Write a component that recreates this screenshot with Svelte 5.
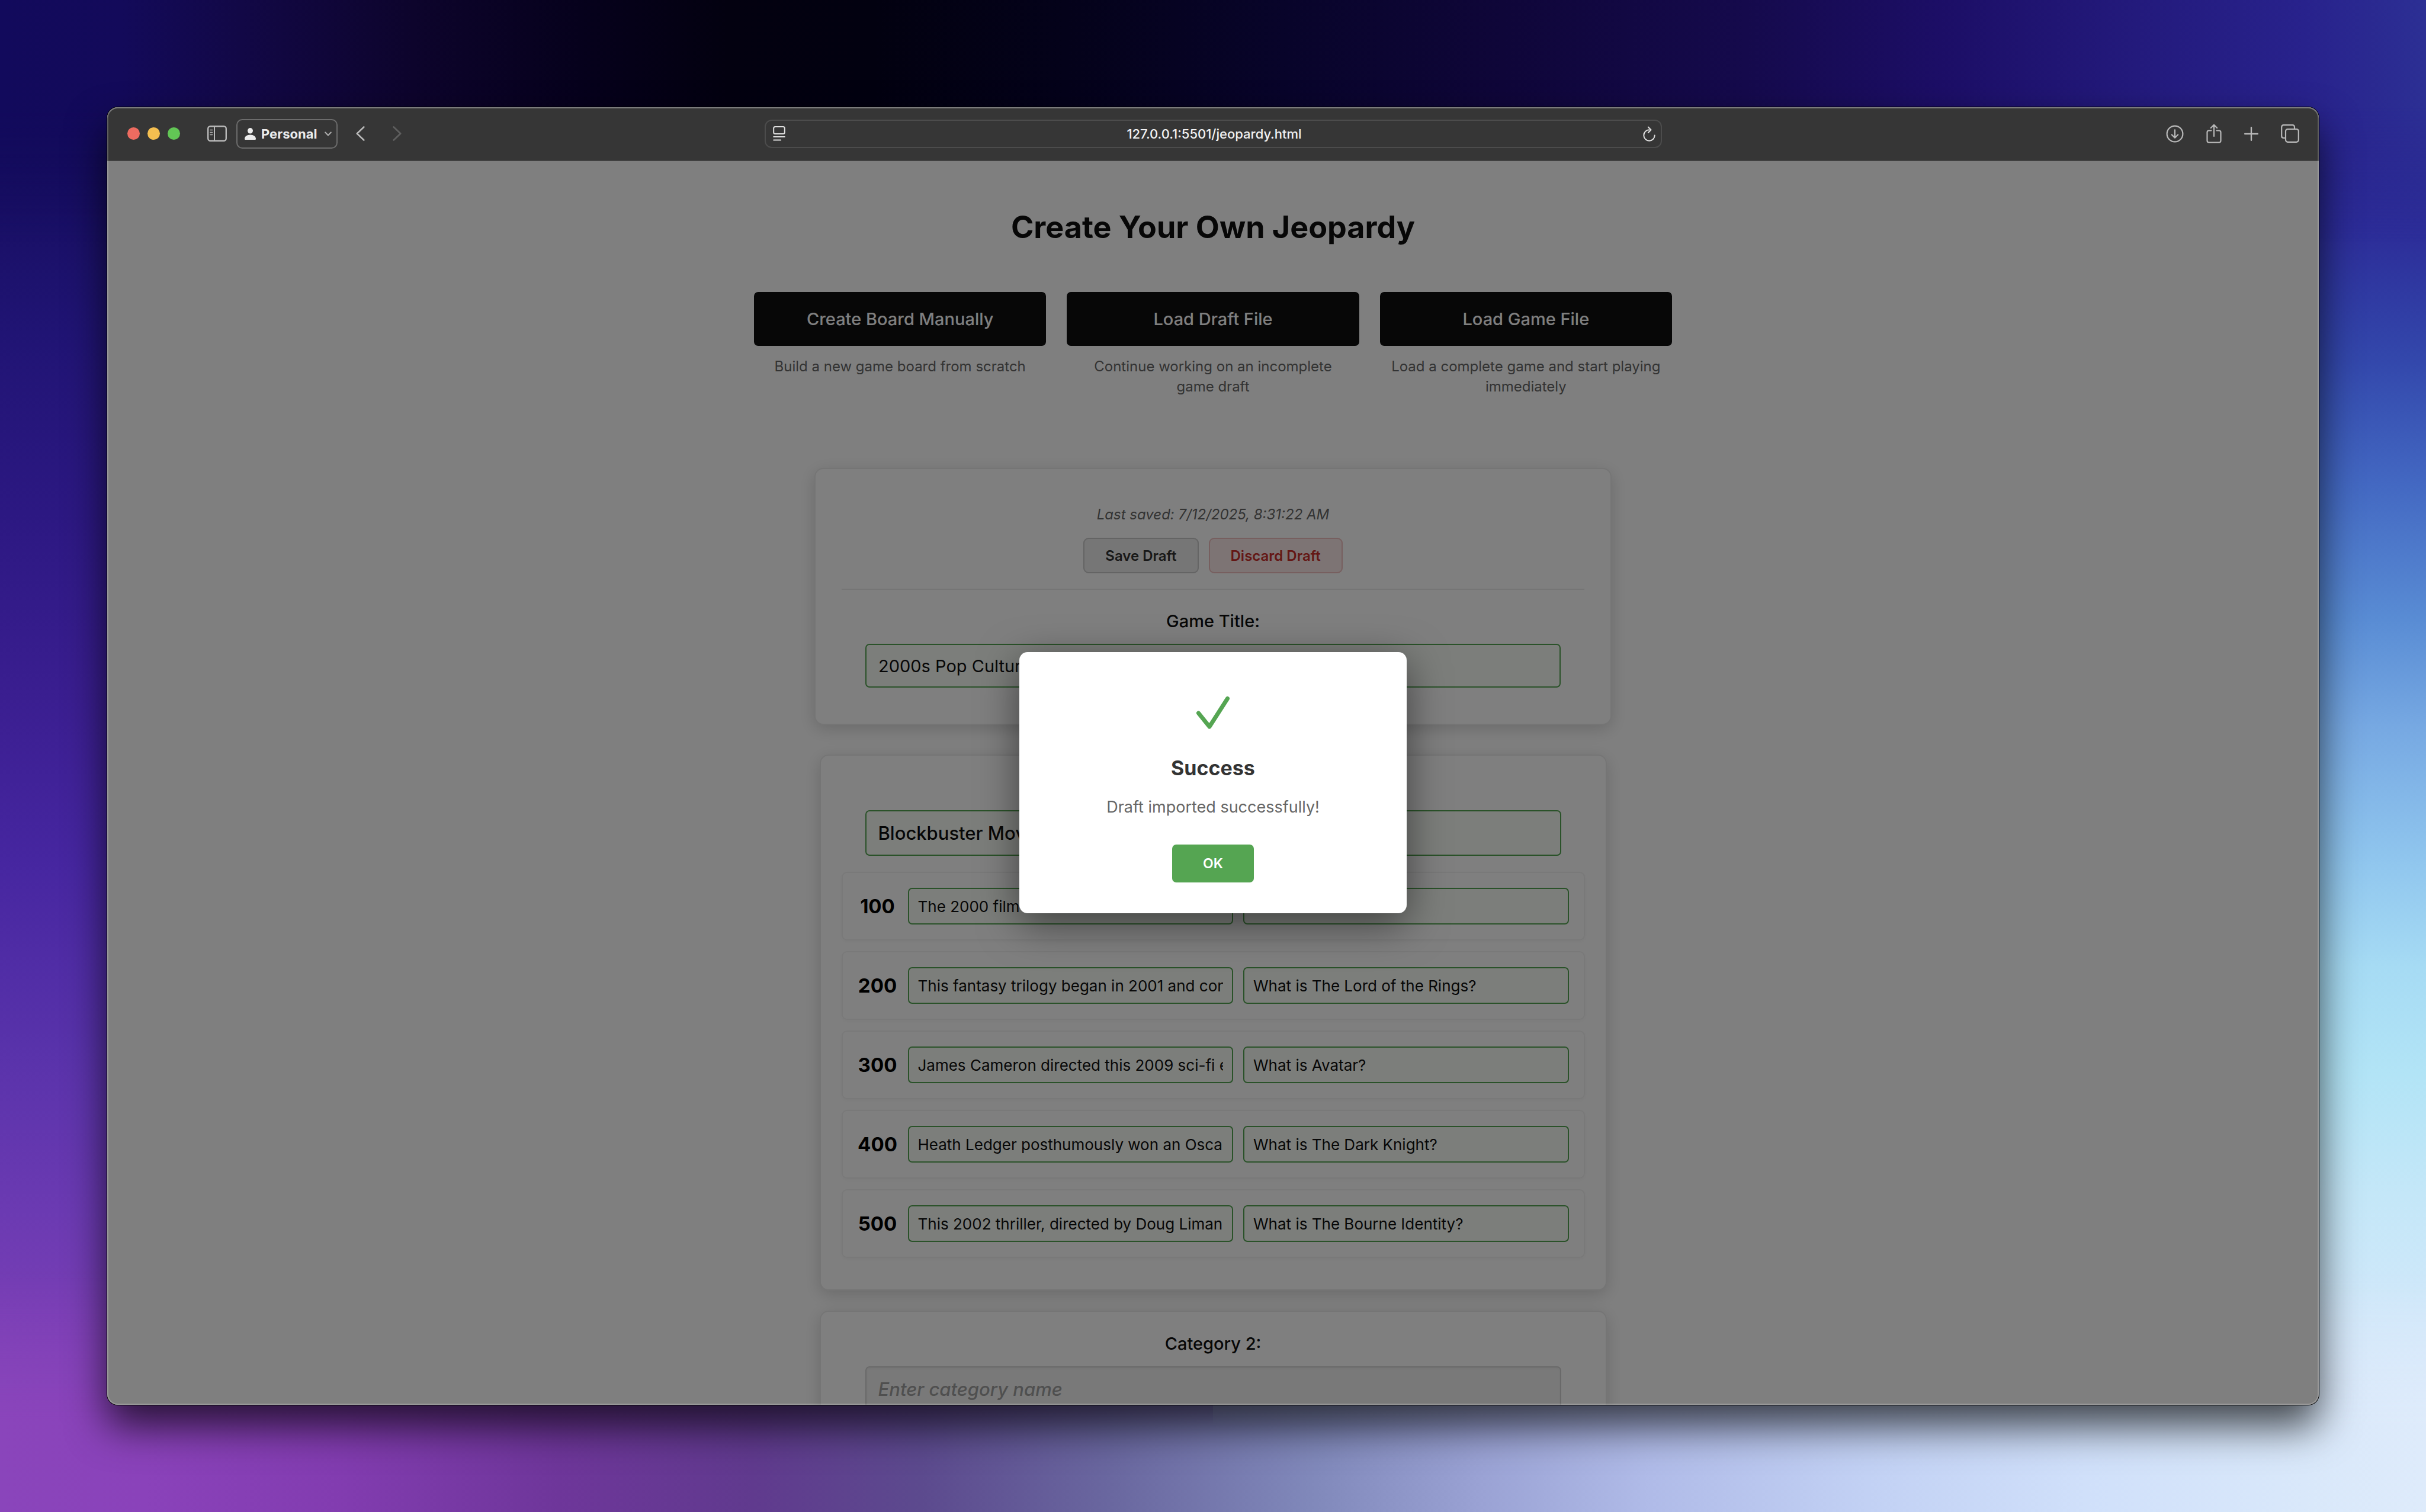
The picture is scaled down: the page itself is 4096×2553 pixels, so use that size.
<script>
  const actions = [
    { label: 'Create Board Manually', hint: 'Build a new game board from scratch' },
    { label: 'Load Draft File', hint: 'Continue working on an incomplete game draft' },
    { label: 'Load Game File', hint: 'Load a complete game and start playing immediately' },
  ];

  let gameTitle = $state('2000s Pop Culture');
  let categories = $state([
    {
      id: 1,
      name: 'Blockbuster Movies',
      questions: [
        { value: 100, clue: 'The 2000 film that won Best Picture', answer: 'What is Gladiator?' },
        { value: 200, clue: 'This fantasy trilogy began in 2001 and concluded in 2003', answer: 'What is The Lord of the Rings?' },
        { value: 300, clue: 'James Cameron directed this 2009 sci-fi epic', answer: 'What is Avatar?' },
        { value: 400, clue: 'Heath Ledger posthumously won an Oscar for this film', answer: 'What is The Dark Knight?' },
        { value: 500, clue: 'This 2002 thriller, directed by Doug Liman', answer: 'What is The Bourne Identity?' },
      ],
    },
    { id: 2, name: '', questions: [] },
  ]);
</script>

<div class="desktop">
  <div class="window">
    <header class="toolbar">
      <div class="group">
        <div class="lights">
          <button class="light red" aria-label="Close window"></button>
          <button class="light yellow" aria-label="Minimize window"></button>
          <button class="light green" aria-label="Zoom window"></button>
        </div>
        <button class="icon" aria-label="Show sidebar">
          <svg width="33" height="27" viewBox="0 0 33 27" fill="none" stroke="#b9b9b9" stroke-width="2.4" stroke-linecap="round">
            <rect x="1.2" y="1.2" width="30.6" height="24.6" rx="4" />
            <path d="M12 1.5v24" stroke-width="2" />
            <path d="M5 7.5h3.6M5 11.5h3.6M5 15.5h3.6" stroke-width="1.6" />
          </svg>
        </button>
        <button class="profile">
          <svg width="19" height="20" viewBox="0 0 19 20" fill="#ececec">
            <ellipse cx="9.5" cy="4.8" rx="4.5" ry="4.8" />
            <path d="M0 18.5C0 14.4 4 11.4 9.5 11.4S19 14.4 19 18.5Q19 20 17.5 20H1.5Q0 20 0 18.5Z" />
          </svg>
          <span>Personal</span>
          <svg width="12" height="8" viewBox="0 0 12 8" fill="none" stroke="#b0b0b0" stroke-width="2" stroke-linecap="round" stroke-linejoin="round"><path d="M1.2 1.5 6 6.5l4.8-5" /></svg>
        </button>
        <div class="history">
          <button class="icon" aria-label="Back">
            <svg width="15" height="25" viewBox="0 0 15 25" fill="none" stroke="#b9b9b9" stroke-width="2.6" stroke-linecap="round" stroke-linejoin="round"><path d="M13.3 1.5 1.8 12.5l11.5 11" /></svg>
          </button>
          <button class="icon" aria-label="Forward">
            <svg width="15" height="25" viewBox="0 0 15 25" fill="none" stroke="#5f5f5f" stroke-width="2.6" stroke-linecap="round" stroke-linejoin="round"><path d="m1.7 1.5 11.5 11-11.5 11" /></svg>
          </button>
        </div>
      </div>

      <div class="address">
        <button class="icon" aria-label="Page menu">
          <svg width="21" height="25" viewBox="0 0 21 25" fill="none" stroke="#dedede" stroke-width="2" stroke-linecap="round">
            <rect x="1.2" y="1" width="18.6" height="12" rx="2.5" />
            <path d="M1.2 18h18.6M1.2 23.5h12" />
          </svg>
        </button>
        <input aria-label="Address" value="127.0.0.1:5501/jeopardy.html" />
        <button class="icon" aria-label="Reload">
          <svg width="21" height="26" viewBox="0 0 21 26" fill="none" stroke="#dedede" stroke-width="2" stroke-linecap="round" stroke-linejoin="round">
            <path d="M10.5 6.3A9.2 9.2 0 1 0 19.7 15.5" />
            <path d="m8.8 1.5 4.7 4.8-4.7 4.7" />
          </svg>
        </button>
      </div>

      <div class="group tools">
        <button class="icon" aria-label="Downloads">
          <svg width="30" height="30" viewBox="0 0 30 30" fill="none" stroke="#b9b9b9" stroke-width="2.2" stroke-linecap="round" stroke-linejoin="round">
            <circle cx="15" cy="15" r="13.4" />
            <path d="M15 8.3v13M9.8 16.5l5.2 5.2 5.2-5.2" />
          </svg>
        </button>
        <button class="icon" aria-label="Share">
          <svg width="26" height="34" viewBox="0 0 26 34" fill="none" stroke="#b9b9b9" stroke-width="2.2" stroke-linecap="round" stroke-linejoin="round">
            <path d="M8.5 11.5H4.5Q1.5 11.5 1.5 14.5V28.5Q1.5 31.5 4.5 31.5H21.5Q24.5 31.5 24.5 28.5V14.5Q24.5 11.5 21.5 11.5H17.5" />
            <path d="M13 21V2M7.8 7 13 1.8 18.2 7" />
          </svg>
        </button>
        <button class="icon" aria-label="New tab">
          <svg width="24" height="24" viewBox="0 0 24 24" fill="none" stroke="#b9b9b9" stroke-width="2.4" stroke-linecap="round"><path d="M12 1.2v21.6M1.2 12h21.6" /></svg>
        </button>
        <button class="icon" aria-label="Tab overview">
          <svg width="31" height="31" viewBox="0 0 31 31" fill="none" stroke="#b9b9b9" stroke-width="2.2" stroke-linecap="round">
            <rect x="8" y="8" width="21.8" height="21.8" rx="3.5" />
            <path d="M23 7.5V4.7Q23 1.2 19.5 1.2H4.7Q1.2 1.2 1.2 4.7V19.5Q1.2 23 4.7 23H7.5" />
          </svg>
        </button>
      </div>
    </header>

    <div class="viewport">
      <main>
        <h1>Create Your Own Jeopardy</h1>

        <div class="actions">
          {#each actions as action}
            <div class="action">
              <button>{action.label}</button>
              <p>{action.hint}</p>
            </div>
          {/each}
        </div>

        <section class="card draft">
          <div class="status">
            <p>Last saved: 7/12/2025, 8:31:22 AM</p>
            <div class="buttons">
              <button class="save">Save Draft</button>
              <button class="discard">Discard Draft</button>
            </div>
          </div>
          <div class="field">
            <label for="game-title">Game Title:</label>
            <input id="game-title" class="title filled" placeholder="Enter game title" bind:value={gameTitle} />
          </div>
        </section>

        {#each categories as category (category.id)}
          <section class="card category">
            <div class="field">
              <label for="category-{category.id}">Category {category.id}:</label>
              <input
                id="category-{category.id}"
                class="name"
                class:filled={category.name}
                placeholder="Enter category name"
                bind:value={category.name}
              />
            </div>
            <div class="questions">
              {#each category.questions as question}
                <div class="question">
                  <span class="value">{question.value}</span>
                  <input class="filled" aria-label="Clue for {question.value}" bind:value={question.clue} />
                  <input class="filled" aria-label="Answer for {question.value}" bind:value={question.answer} />
                </div>
              {/each}
            </div>
          </section>
        {/each}
      </main>

      <div class="overlay">
        <div class="modal" role="dialog" aria-modal="true" aria-labelledby="modal-title">
          <svg class="check" width="58" height="56" viewBox="0 0 58 56" fill="none" stroke="#55a552" stroke-width="7" stroke-linecap="round" stroke-linejoin="round"><path d="M4.5 29 23 52 53.5 4.5" /></svg>
          <h2 id="modal-title">Success</h2>
          <p>Draft imported successfully!</p>
          <button>OK</button>
        </div>
      </div>
    </div>
  </div>
</div>

<style>
  :global(body) {
    margin: 0;
    background: #0b0630;
  }

  .desktop,
  .desktop * {
    box-sizing: border-box;
  }

  .desktop {
    position: relative;
    display: flex;
    height: 100vh;
    padding: 181px;
    overflow: hidden;
    font-family: Inter, 'Liberation Sans', sans-serif;
    background:
      linear-gradient(180deg, #120a5c 0%, #150d5e 10%, #201474 22%, #2c1882 34%, #3a1e90 46%, #4626a0 57%, #5832aa 69%, #6b3ab2 80%, #7c40b6 90%, #8a44bb 100%) left / 50% 100% no-repeat,
      linear-gradient(180deg, #2a268e 0%, #28248e 8%, #2c2c98 15%, #3348ac 24%, #4368c2 32%, #598cd4 41%, #76a8e2 48%, #90c6ee 57%, #a6dbf4 64%, #b2e4f6 71%, #c4e7f8 79%, #d0e8fa 87%, #dae9f9 94%, #deebfb 100%) right / 50% 100% no-repeat;
  }

  .desktop::before,
  .desktop::after {
    position: absolute;
    right: 0;
    left: 0;
    height: 16%;
    content: '';
  }

  .desktop::before {
    top: 0;
    background: linear-gradient(90deg, #120a5c 0%, #130a5a 5%, #120846 10%, #0d042c 17%, #06011c 24%, #030110 30%, #020110 36%, #04021a 44%, #08042a 53%, #0f0639 62%, #150a4c 72%, #1c0e66 80%, #231a7c 88%, #28228c 95%, #2c2f94 100%);
    mask-image: linear-gradient(180deg, #000 44%, transparent);
  }

  .desktop::after {
    bottom: 0;
    background: linear-gradient(90deg, #8a45bb 0%, #8a42ba 6%, #823cb0 14%, #6e369a 23%, #603a8e 31%, #5c4a8e 38%, #6a68a0 46%, #8088ba 54%, #9aa2d4 61%, #b0bbe8 68%, #c2d1f4 77%, #d0e0fa 86%, #d9e8fa 95%, #deebfb 100%);
    mask-image: linear-gradient(0deg, #000 36%, transparent);
  }

  button,
  input {
    margin: 0;
    font: inherit;
  }

  button {
    padding: 0;
    border: 0;
    background: none;
    cursor: pointer;
  }

  .window {
    position: relative;
    z-index: 1;
    display: flex;
    flex: 1;
    flex-direction: column;
    min-width: 0;
    overflow: hidden;
    border-radius: 18px;
    background: #fff;
    box-shadow:
      0 0 0 1px #000,
      0 36px 68px rgba(0, 0, 0, 0.7);
  }

  .window::after {
    position: absolute;
    inset: 0;
    border-radius: 18px;
    box-shadow:
      inset 0 0 0 2px rgba(255, 255, 255, 0.2),
      inset 0 2px 0 rgba(255, 255, 255, 0.18);
    content: '';
    pointer-events: none;
  }

  .toolbar {
    display: grid;
    flex: none;
    grid-template-columns: 27fr 38fr 27fr;
    align-items: center;
    height: 90px;
    padding: 0 33px 0 34px;
    border-bottom: 1px solid #000;
    background: #363636;
    color: #ececec;
  }

  .group {
    display: flex;
    align-items: center;
  }

  .lights {
    display: flex;
    gap: 13px;
    margin-right: 46px;
  }

  .light {
    width: 21px;
    height: 21px;
    border-radius: 50%;
  }

  .red {
    background: #ed6b60;
  }

  .yellow {
    background: #f5bf50;
  }

  .green {
    background: #62c655;
  }

  .icon {
    display: flex;
  }

  .profile {
    display: flex;
    align-items: center;
    height: 50px;
    margin: 0 31px 0 16px;
    padding: 0 8px 0 12px;
    border: 2px solid #6c6c6c;
    border-radius: 10px;
    color: #ececec;
    font-size: 22px;
    font-weight: 700;
  }

  .profile span {
    margin: 0 13px 0 9px;
  }

  .history {
    display: flex;
    gap: 47px;
  }

  .tools {
    justify-content: flex-end;
    gap: 38px;
  }

  .address {
    display: flex;
    align-items: center;
    height: 48px;
    padding: 0 9px 0 12px;
    border: 2px solid #4c4c4c;
    border-radius: 12px;
  }

  .address input {
    flex: 1;
    min-width: 0;
    padding: 0;
    border: 0;
    background: none;
    color: #f2f2f2;
    font-size: 22px;
    font-weight: 500;
    text-align: center;
  }

  .viewport {
    position: relative;
    flex: 1;
    min-height: 0;
    overflow: hidden;
  }

  main {
    display: flex;
    flex-direction: column;
    align-items: center;
    padding: 80px 40px;
    color: #0f0f0f;
  }

  h1 {
    margin: 0 0 76px;
    font-size: 52px;
    font-weight: 700;
    line-height: 66px;
  }

  .actions {
    display: grid;
    grid-template-columns: repeat(3, 1fr);
    gap: 35px;
    width: 100%;
    max-width: 1550px;
    margin-bottom: 120px;
  }

  .action button {
    width: 100%;
    height: 91px;
    border-radius: 7px;
    background: #0f0f0f;
    color: #fff;
    font-size: 29px;
    font-weight: 500;
  }

  .action p {
    margin: 18px 14px 0;
    color: #666;
    font-size: 24px;
    line-height: 34px;
    text-align: center;
  }

  .card {
    width: 100%;
    border: 2px solid #ebebeb;
    border-radius: 15px;
    background: #fff;
    box-shadow: 0 7px 28px rgba(0, 0, 0, 0.17);
  }

  .draft {
    max-width: 1346px;
    margin-bottom: 50px;
    padding: 60px 44px 61px;
  }

  .status {
    padding-bottom: 26px;
    border-bottom: 2px solid #ebebeb;
    text-align: center;
  }

  .status p {
    margin: 0 0 22px;
    color: #666;
    font-size: 24px;
    font-style: italic;
    line-height: 34px;
  }

  .buttons {
    display: flex;
    justify-content: center;
    gap: 17px;
  }

  .buttons button {
    height: 60px;
    padding: 0 35px;
    border: 2px solid #c8c8c8;
    border-radius: 9px;
    background: #ededed;
    color: #333;
    font-size: 24px;
    font-weight: 600;
  }

  .buttons .discard {
    border-color: #eebebe;
    background: #fae8e8;
    color: #c92f2b;
  }

  .field {
    display: flex;
    flex-direction: column;
    gap: 19px;
    padding: 34px 40px 0;
  }

  label {
    font-size: 29px;
    font-weight: 500;
    line-height: 38px;
    text-align: center;
  }

  .card input {
    width: 100%;
    min-width: 0;
    height: 62px;
    padding: 0 15px;
    border: 2px solid #d2d2d2;
    border-radius: 7px;
    outline: 0;
    background: #f3f3f3;
    color: #0f0f0f;
    font-size: 26px;
  }

  .card input.filled {
    border-color: #55a552;
    background: #f9fcf6;
  }

  .card .title {
    height: 74px;
    padding: 0 20px;
    font-size: 29px;
  }

  .card .name {
    height: 77px;
    padding: 0 20px;
    font-size: 31px;
    font-weight: 500;
  }

  .name:not(.filled) {
    box-shadow: inset 0 2px 4px rgba(0, 0, 0, 0.04);
  }

  input::placeholder {
    color: #9f9f9f;
    font-style: italic;
    opacity: 1;
  }

  .category {
    max-width: 1329px;
    margin-bottom: 34px;
    padding: 1px 35px 53px;
  }

  .questions {
    display: flex;
    flex-direction: column;
    gap: 18px;
    margin-top: 27px;
  }

  .question {
    display: grid;
    grid-template-columns: 68px 1fr 1fr;
    align-items: center;
    gap: 17px;
    height: 116px;
    padding: 0 25px;
    border: 2px solid #f3f3f3;
    border-radius: 9px;
    box-shadow: 0 2px 6px rgba(0, 0, 0, 0.04);
  }

  .value {
    color: #000;
    font-size: 33px;
    font-weight: 700;
    text-align: center;
  }

  .overlay {
    position: absolute;
    inset: 0;
    display: flex;
    align-items: center;
    justify-content: center;
    background: rgba(0, 0, 0, 0.5);
  }

  .modal {
    display: flex;
    flex-direction: column;
    align-items: center;
    width: 654px;
    padding: 74px 52px 52px;
    border-radius: 14px;
    background: #fff;
    box-shadow: 0 17px 68px rgba(0, 0, 0, 0.5);
  }

  .modal h2 {
    margin: 44px 0 22px;
    color: #333;
    font-size: 34px;
    font-weight: 700;
    line-height: 44px;
  }

  .modal p {
    margin: 0 0 41px;
    color: #666;
    font-size: 27px;
    line-height: 44px;
  }

  .modal button {
    width: 138px;
    height: 64px;
    border-radius: 7px;
    background: #55a552;
    color: #fff;
    font-size: 23px;
    font-weight: 600;
  }
</style>
